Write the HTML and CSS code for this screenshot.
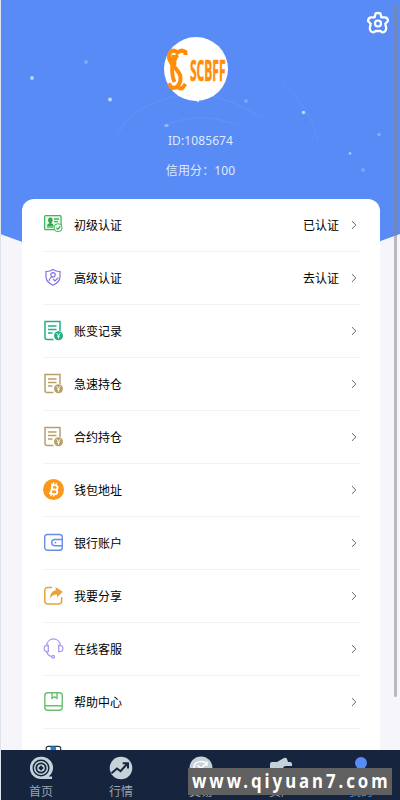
FILE: index.html
```html
<!DOCTYPE html>
<html lang="zh-CN">
<head>
<meta charset="utf-8">
<title>我的</title>
<link rel="stylesheet" href="styles.css">
</head>
<body>
<svg class="defs" width="0" height="0" aria-hidden="true">
  <symbol id="chev" viewBox="0 0 8 10"><path d="M2 1.2 5.9 5 2 8.8" fill="none" stroke="#666" stroke-width="1"/></symbol>
  <symbol id="record" viewBox="0 0 22 22"><g fill="none" stroke="currentColor" stroke-width="1.5"><path d="M10.5 19.500H4.2C3 19.500 2 19 2 17.500M2 18V1.500H17V11M5 6H13.500M5 9.500H13.500M5 13H9.500"/></g><circle cx="15.500" cy="15.700" r="4.500" fill="currentColor"/><path d="M13.700 13.200 15.500 15.700 17.300 13.200M15.500 15.700V18.700M14 16.200H17" fill="none" stroke="#fff" stroke-width=".9"/></symbol>
</svg>
<div class="page">
  <header class="hero">
    <svg class="sky" viewBox="0 0 400 250" aria-hidden="true">
      <path d="M0 0H400V234L200 306 0 234Z" fill="#588bf6"/>
      <g fill="none" stroke="#fff" stroke-opacity=".07"><path d="M164 126Q200 109 242 127M142 109Q198 76 262 118M116 138Q126 116 140 110M282 83Q310 107 318 140"/></g>
      <g fill="#c9e4ff"><circle cx="32" cy="78" r="2" opacity=".8"/><circle cx="110" cy="99.500" r="2" opacity=".85"/><circle cx="86" cy="62" r="2" opacity=".35"/><circle cx="303.500" cy="112.500" r="1.800" opacity=".85"/><circle cx="246" cy="101" r="1.800" opacity=".4"/><ellipse cx="166.500" cy="125.500" rx="2.300" ry="1.500" opacity=".5"/><circle cx="379" cy="134.500" r="1.800" opacity=".4"/><circle cx="350" cy="153.500" r="1.400" opacity=".6"/><circle cx="363" cy="170" r="2" opacity=".3"/><circle cx="198" cy="101" r="1.200"/></g>
    </svg>
    <svg class="gear" viewBox="0 0 24 24"><path d="M9.300 3.200Q9.500 2 12 2T14.700 3.200L15.300 6.300 18.800 6.300Q21.800 6.300 22 10L19.300 12.700 20.200 17Q20 21.500 16.300 21.300L14.300 20H9.700L7.700 21.300Q4 21.500 3.800 17L4.700 12.700 2 10Q2.200 6.300 5.200 6.300L8.700 6.300Z" fill="none" stroke="#fff" stroke-width="2.300" stroke-linejoin="round"/><circle cx="12" cy="12.500" r="3" fill="none" stroke="#fff" stroke-width="2.200"/></svg>
    <svg class="avatar" viewBox="0 0 64 64"><circle cx="32" cy="32" r="32" fill="#fff"/><g fill="none" stroke="#ff8d08" stroke-linejoin="round"><path d="M21.500 18V15Q17 12 14 15.500L10 13.500Q4.500 14 5 21C6 28 16 33 16.500 40Q17 47 12 50.500L8 51 4.500 46.500" stroke-width="4"/><path d="M9.500 18C8 26 7 38 10.500 45M10.500 28Q10 20 14 18M14 51L18 51.500 21.500 47" stroke-width="3.800"/></g><text transform="translate(26 43.500) scale(.415 1)" class="logo-text">SCBFF</text></svg>
    <div class="uid">ID:1085674</div>
    <div class="credit">信用分：100</div>
  </header>
  <main class="card">
    <div class="row"><svg class="ico" viewBox="0 0 22 22"><g fill="none" stroke="#41b75b" stroke-width="1.300"><rect x="1.600" y="1.700" width="16.500" height="14" rx="1" fill="#e7f8ea"/><path d="M11 5H16M11 7.700H15M4 13.200H10.500"/><circle cx="15.100" cy="13.700" r="4" fill="#f5fff6" stroke-width="1"/><path d="m13.300 13.700 1.500 1.500 2.600-3"/></g><path d="M4 12.200Q4 9.900 6.400 9.300 4.800 7.500 5 5.500 5.500 3.500 7.400 3.500T9.700 5.500Q9.800 7.500 8.300 9.300 10.700 9.900 10.700 12.200Z" fill="#32aa4c"/></svg><span class="label">初级认证</span><span class="value">已认证</span><svg class="chev"><use href="#chev"/></svg></div>
    <div class="row"><svg class="ico" viewBox="0 0 22 22"><g fill="none" stroke="#8670df" stroke-width="1.200"><path d="M10 2.500Q13.300 4.700 17 4.500V10Q16.800 15.200 10 18.200 3.200 15.200 3 10V4.500Q6.800 4.700 10 2.500Z"/><circle cx="10" cy="7.800" r="2.200"/><path d="M6.100 13.800Q6.800 10 10 10M10 12 12 14 15.300 10.700"/></g></svg><span class="label">高级认证</span><span class="value">去认证</span><svg class="chev"><use href="#chev"/></svg></div>
    <div class="row"><svg class="ico green" viewBox="0 0 22 22"><use href="#record"/></svg><span class="label">账变记录</span><svg class="chev"><use href="#chev"/></svg></div>
    <div class="row"><svg class="ico tan" viewBox="0 0 22 22"><use href="#record"/></svg><span class="label">急速持仓</span><svg class="chev"><use href="#chev"/></svg></div>
    <div class="row"><svg class="ico tan" viewBox="0 0 22 22"><use href="#record"/></svg><span class="label">合约持仓</span><svg class="chev"><use href="#chev"/></svg></div>
    <div class="row"><svg class="ico" viewBox="0 0 22 22"><circle cx="10.500" cy="10.500" r="10.500" fill="#f8981d"/><g transform="rotate(12 10.500 10.500)" fill="none" stroke="#fff"><path d="M7 6H11.500C15 6 15 10.300 11.500 10.300H8.500M8.500 10.300H12C16 10.300 15.500 15 12 15H7M8.700 6V15" stroke-width="1.900"/><path d="M9.300 3.500V6M12 3.500V6M9.300 15V17.500M12 15V17.500" stroke-width="1.300"/></g></svg><span class="label">钱包地址</span><svg class="chev"><use href="#chev"/></svg></div>
    <div class="row"><svg class="ico" viewBox="0 0 22 22"><g fill="none" stroke="#658ee8" stroke-width="1.400"><rect x="1.700" y="2.500" width="17.600" height="15.800" rx="2.800"/><path d="M19.300 7.500H11.800A3.100 3.100 0 0 0 11.800 13.700H19.300"/></g><circle cx="12.500" cy="10.600" r=".9" fill="#658ee8"/></svg><span class="label">银行账户</span><svg class="chev"><use href="#chev"/></svg></div>
    <div class="row"><svg class="ico" viewBox="0 0 22 22"><path d="M9 2.500H5Q1.800 2.500 1.800 5.500V16Q1.800 19 5 19H15.500Q18.700 19 18.700 16V12" fill="none" stroke="#e8a43a" stroke-width="1.500"/><path d="M12.500 2 19.800 6.800 14 12.500V9.500Q9.500 9.500 6.800 13.500 7.300 6 12.800 5.200Z" fill="#e8a43a"/></svg><span class="label">我要分享</span><svg class="chev"><use href="#chev"/></svg></div>
    <div class="row"><svg class="ico" viewBox="0 0 22 22"><g fill="none" stroke="#a99af0" stroke-width="1.300"><path d="M3.500 7.700C4.500-1.300 16.500-1.300 17.500 7.700M3.500 13.500Q4.500 17.500 8.800 18.700"/><path d="M5.300 7.300V13.700Q1.100 14 1.100 10.500T5.300 7.300ZM15.700 7.300V13.700Q19.900 14 19.900 10.500T15.700 7.300Z"/><circle cx="10.200" cy="18.700" r="1.300"/></g></svg><span class="label">在线客服</span><svg class="chev"><use href="#chev"/></svg></div>
    <div class="row"><svg class="ico" viewBox="0 0 22 22"><g fill="none" stroke="#6abf70" stroke-width="1.400"><rect x="1.800" y="1.700" width="17.500" height="17.500" rx="3"/><path d="M2 14.700H19.200M9 2V7.300L11.500 5.800 14 7.300V2"/></g></svg><span class="label">帮助中心</span><svg class="chev"><use href="#chev"/></svg></div>
    <div class="row"><svg class="ico" viewBox="0 0 22 22"><rect x="3.200" y="2.300" width="14.500" height="18" rx="2" fill="#fff" stroke="#27313f" stroke-width="1.200"/><path d="M7.500 2.500H13V11L10.200 9 7.500 11Z" fill="#1687dc"/></svg></div>
  </main>
  <nav class="tabs">
    <div class="tab"><svg viewBox="0 0 24 24"><path d="M12 .8A11 11 0 1 0 12 23H23V20.500H19.700A11 11 0 0 0 12 .8Z" fill="#c5d2d9"/><g fill="none" stroke="#16253d" stroke-width="1.400"><circle cx="12" cy="12" r="7.800"/><circle cx="12" cy="12" r="4.700" stroke-width="1.800"/></g><path d="m12 9.300 2.700 2.700-2.700 2.700L9.300 12Z" fill="#16253d"/></svg><span>首页</span></div>
    <div class="tab"><svg viewBox="0 0 24 24"><circle cx="12" cy="12" r="11.300" fill="#c5d2d9"/><path d="M2.500 17.200 8 12.500 11.500 15.200 18.300 7.800M13.700 7.200H19V12.500" fill="none" stroke="#16253d" stroke-width="2"/></svg><span>行情</span></div>
    <div class="tab"><svg viewBox="0 0 24 24"><circle cx="12" cy="12" r="11.500" fill="#c5d2d9"/><path d="M5 12C5 4 16 4 18 9M18 5.500V9H14.500M19 12C19 20 8 20 6 15M8.500 9 12 12.500 15.500 9M12 12.500V17" fill="none" stroke="#fff" stroke-width="1.400"/></svg><span>交易</span></div>
    <div class="tab"><svg viewBox="0 0 24 24"><path d="M1 8Q1 6 3 6H8L15 2Q17 1 18 3L19 6H21Q23 6 23 8V10H17Q14 10 14 13T17 16H23V20Q23 22 21 22H3Q1 22 1 20Z" fill="#c5d2d9"/></svg><span>资产</span></div>
    <div class="tab active"><svg viewBox="0 0 24 24"><circle cx="12" cy="7" r="6" fill="#588bf6"/><path d="M1.500 23Q1.500 14 12 14T22.500 23Z" fill="#588bf6"/></svg><span>我的</span></div>
  </nav>
  <div class="scrollbar"></div>
  <svg class="watermark" viewBox="0 0 204 27"><text transform="translate(4 20) scale(.84 1)" textLength="233" lengthAdjust="spacing">www.qiyuan7.com</text></svg>
</div>
</body>
</html>
```
FILE: styles.css
```css
* { box-sizing: border-box; }
body {
  margin: 0;
  overflow: hidden;
  background: #f5f5fa;
  font-family: "Noto Sans", "Noto Sans CJK SC", sans-serif;
}
.defs { position: absolute; }
.page {
  position: relative;
  height: 800px;
  overflow: hidden;
  display: flex;
  flex-direction: column;
  border-left: 1px solid #dce2ee;
}
.hero {
  position: relative;
  flex: 0 0 199px;
  display: flex;
  flex-direction: column;
  align-items: center;
  padding-top: 37px;
  color: #dfeaff;
  font-size: 12px;
  line-height: 18px;
}
.sky {
  position: absolute;
  top: 0;
  left: -1px;
  width: 400px;
  height: 250px;
}
.gear {
  position: absolute;
  top: 11px;
  right: 10px;
  width: 24px;
  height: 24px;
}
.avatar {
  position: relative;
  width: 64px;
  height: 64px;
  margin-right: 9px;
}
.logo-text {
  font: bold 29px "Open Sans", sans-serif;
  fill: #ff8d08;
  stroke: #ff8d08;
  stroke-width: .6px;
}
.uid, .credit { position: relative; }
.uid { margin-top: 31px; letter-spacing: .1px; }
.credit { margin-top: 12px; letter-spacing: .1px; }
.card {
  position: relative;
  flex: 1;
  min-height: 0;
  overflow: hidden;
  margin: 0 20px 0 21px;
  padding: 0 20px 0 21px;
  background: #fff;
  border-radius: 12px 12px 0 0;
}
.row {
  display: flex;
  align-items: center;
  height: 53px;
  border-bottom: 1px solid #f2f2f4;
  color: #000;
  font-size: 12px;
}
.ico { width: 22px; height: 22px; }
.green { color: #26ae88; }
.tan { color: #b7a06c; }
.label { flex: 1; margin-left: 9px; }
.value { margin-right: 11px; }
.chev { width: 8px; height: 10px; margin-right: 2px; }
.tabs {
  flex: 0 0 50px;
  height: 50px;
  position: relative;
  display: flex;
  width: 400px;
  background: #16253d;
  color: #9ba4af;
  font-size: 12px;
  line-height: 16px;
}
.tab {
  flex: 0 0 80px;
  display: flex;
  flex-direction: column;
  align-items: center;
  padding-top: 6px;
}
.tab svg { width: 24px; height: 24px; margin-bottom: 4px; }
.active { color: #3d8df5; }
.scrollbar {
  position: absolute;
  top: 4px;
  right: 3px;
  width: 3px;
  height: 693px;
  border-radius: 2px;
  background: rgba(133, 135, 143, .55);
}
.watermark {
  position: absolute;
  right: 8px;
  bottom: 5px;
  width: 204px;
  height: 27px;
  background: #606060;
}
.watermark text {
  font: bold 20px "Noto Sans", sans-serif;
  fill: #fff;
}
```
